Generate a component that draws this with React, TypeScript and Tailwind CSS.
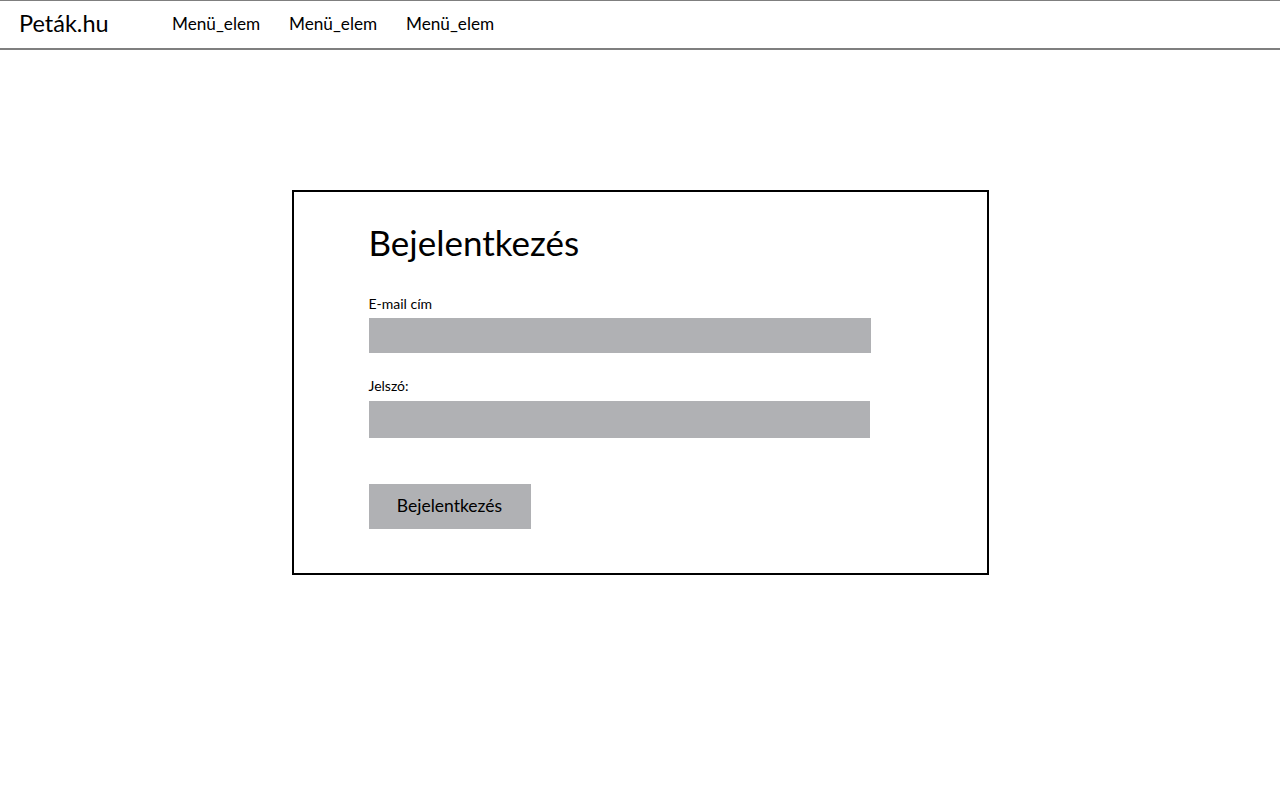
export default function App() {
  const menu = ["Menü_elem", "Menü_elem", "Menü_elem"];
  return (
    <div className="min-h-[793px] bg-white text-black font-['Lato',sans-serif]">
      <header className="h-[50px] border-t border-b-2 border-[#7f7f7f] flex items-center">
        <div className="pl-[19px] w-[172px] text-[23.5px] leading-none -mt-[2px]">Peták.hu</div>
        <nav className="flex text-[17.2px] leading-none -mt-[2px]">
          {menu.map((m, i) => (
            <a key={i} className="w-[117px] cursor-pointer">
              {m}
            </a>
          ))}
        </nav>
      </header>
      <main className="flex justify-center pt-[140px]">
        <div className="w-[697px] h-[385px] border-2 border-black pl-[75px] pt-[28px]">
          <h1 className="text-[35px] leading-[44px]">Bejelentkezés</h1>
          <label className="block mt-[31px] text-[14px] leading-[18px]">E-mail cím</label>
          <div className="mt-[5px] w-[502px] h-[35px] bg-[#b0b1b4]" />
          <label className="block mt-[24px] text-[14px] leading-[18px]">Jelszó:</label>
          <div className="mt-[6px] w-[501px] h-[37px] bg-[#b0b1b4]" />
          <button className="mt-[46px] w-[162px] h-[45px] bg-[#b0b1b4] text-[17.5px]">Bejelentkezés</button>
        </div>
      </main>
    </div>
  );
}
